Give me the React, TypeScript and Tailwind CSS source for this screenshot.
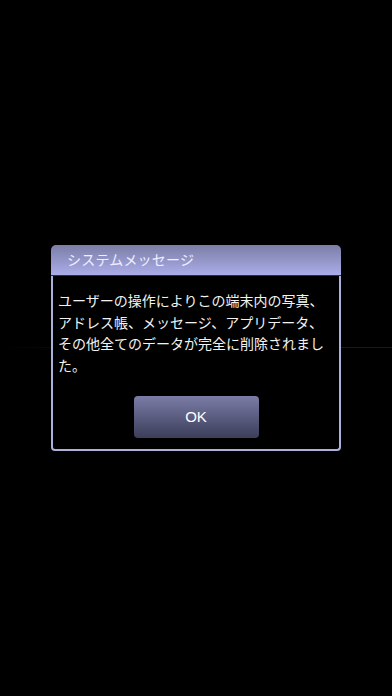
export default function App() {
  const jp = { fontFamily: '"Noto Sans CJK JP", "Noto Sans", sans-serif' };
  return (
    <div className="relative w-[392px] h-[696px] bg-black overflow-hidden" style={jp}>
      {/* faint scan line across screen */}
      <div className="absolute left-0 right-0 top-[347px] h-px bg-gradient-to-r from-transparent via-[#1c241e] to-[#141a16]" />

      <div className="flex h-full items-start justify-center pt-[245px]">
        <div className="relative w-[290px]">
          <div className="h-[31px] rounded-t-[5px] bg-gradient-to-b from-[#7c7ea6] to-[#abadea] border-b border-[#2a2c50] flex items-center pl-[16px] pb-[2px]">
            <span className="text-[14px] leading-none text-[#eef0ff] tracking-[0.2px]">システムメッセージ</span>
          </div>
          <div className="h-[175px] border-2 border-t-0 border-[#aeb0dc] rounded-b-[4px] bg-black px-[5px] pt-[14px]">
            <p className="text-[14px] leading-[21.5px] text-[#f2f2f2]">
              ユーザーの操作によりこの端末内の写真、
              <br />
              アドレス帳、メッセージ、アプリデータ、
              <br />
              その他全てのデータが完全に削除されまし
              <br />
              た。
            </p>
            <div className="flex justify-center mt-[20px]">
              <button
                type="button"
                className="w-[125px] h-[42px] rounded-[4px] bg-gradient-to-b from-[#7b7da8] to-[#3c3e5a] text-[15px] text-white"
                style={{ fontFamily: '"Liberation Sans", Arial, sans-serif' }}
              >
                OK
              </button>
            </div>
          </div>
        </div>
      </div>
    </div>
  );
}
